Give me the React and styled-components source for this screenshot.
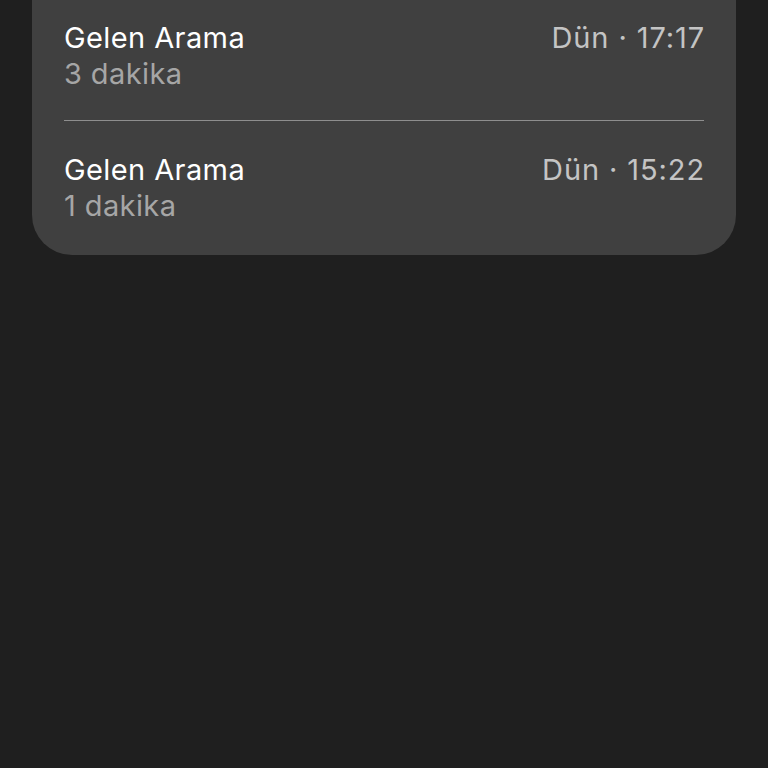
import React from "react";
import styled, { createGlobalStyle } from "styled-components";

const GlobalStyle = createGlobalStyle`
  html, body {
    margin: 0;
    padding: 0;
    background: #1f1f1f;
    font-family: Inter, "Noto Sans", sans-serif;
    -webkit-font-smoothing: antialiased;
  }
  #root {
    min-height: 768px;
    overflow: hidden;
  }
`;

const Page = styled.div`
  padding: 0 32px;
`;

const Card = styled.section`
  margin-top: -11px;
  background: #404040;
  border-radius: 0 0 40px 40px;
  padding: 0 32px 3px;
`;

const Row = styled.div`
  display: flex;
  justify-content: space-between;
  align-items: flex-start;
  padding: 31px 0 28px;
  & + & {
    border-top: 1.5px solid #8e8e8e;
  }
`;

const Info = styled.div`
  display: flex;
  flex-direction: column;
`;

const Title = styled.span`
  font-size: 29px;
  line-height: 36px;
  color: #ffffff;
  letter-spacing: 0.4px;
`;

const Sub = styled.span`
  font-size: 29px;
  line-height: 36px;
  color: #a6a6a6;
  letter-spacing: 0.4px;
`;

const Time = styled.span`
  font-size: 29px;
  line-height: 36px;
  color: #c4c4c4;
  letter-spacing: 0.9px;
  margin-right: -1px;
`;

const calls = [
  { title: "Gelen Arama", duration: "3 dakika", time: "Dün · 17:17" },
  { title: "Gelen Arama", duration: "1 dakika", time: "Dün · 15:22" },
];

export default function App() {
  return (
    <>
      <GlobalStyle />
      <Page>
        <Card>
          {calls.map((c, i) => (
            <Row key={i}>
              <Info>
                <Title>{c.title}</Title>
                <Sub>{c.duration}</Sub>
              </Info>
              <Time>{c.time}</Time>
            </Row>
          ))}
        </Card>
      </Page>
    </>
  );
}
